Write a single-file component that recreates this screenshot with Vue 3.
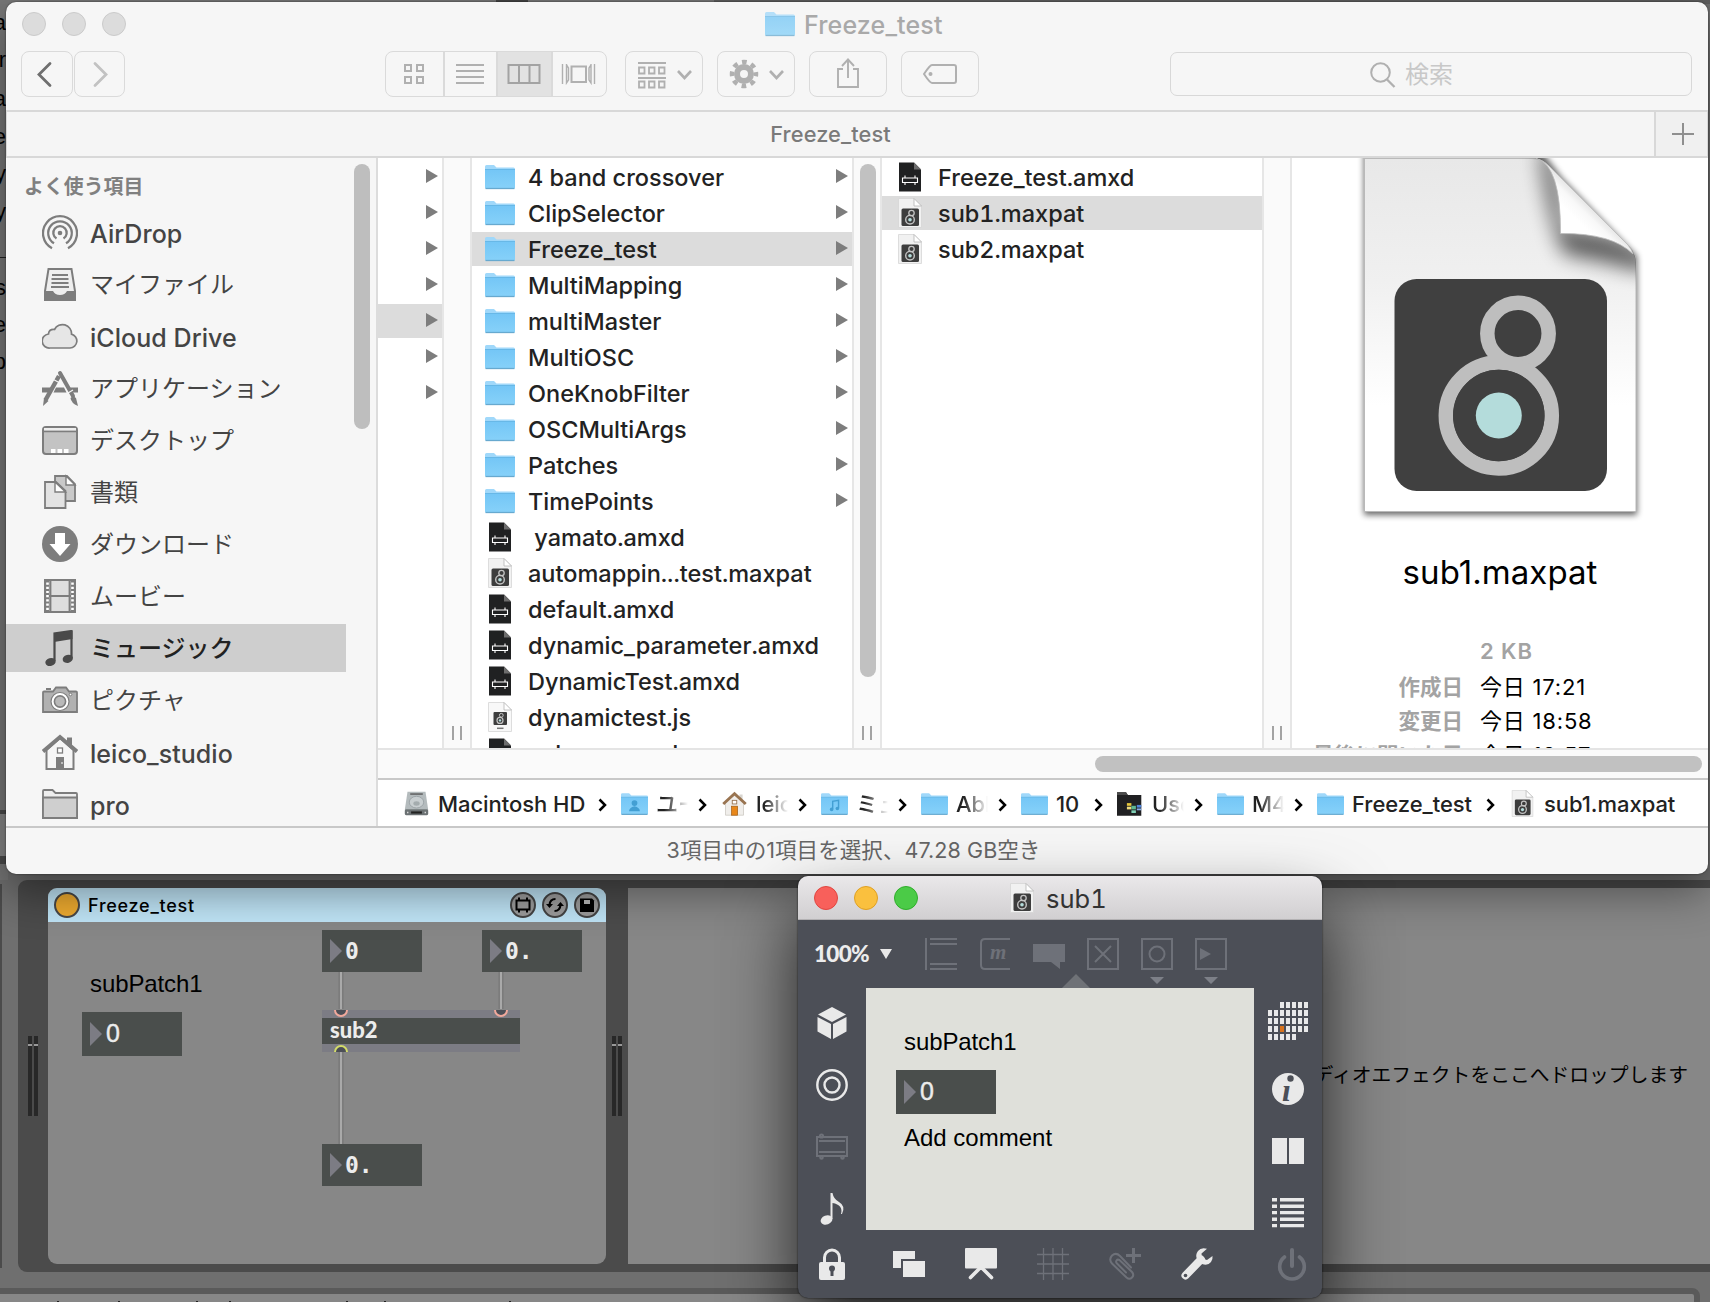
<script setup>
const favorites = [
  { icon: 'airdrop', label: 'AirDrop', latin: true },
  { icon: 'tray', label: 'マイファイル' },
  { icon: 'cloud', label: 'iCloud Drive', latin: true },
  { icon: 'apps', label: 'アプリケーション' },
  { icon: 'desktop', label: 'デスクトップ' },
  { icon: 'docs', label: '書類' },
  { icon: 'download', label: 'ダウンロード' },
  { icon: 'film', label: 'ムービー' },
  { icon: 'music', label: 'ミュージック', active: true },
  { icon: 'camera', label: 'ピクチャ' },
  { icon: 'home', label: 'leico_studio', latin: true },
  { icon: 'folder-gray', label: 'pro', latin: true },
]
const parents = [0, 0, 0, 0, 1, 0, 0]
const files = [
  { icon: 'folder', name: '4 band crossover' },
  { icon: 'folder', name: 'ClipSelector' },
  { icon: 'folder', name: 'Freeze_test', active: true },
  { icon: 'folder', name: 'MultiMapping' },
  { icon: 'folder', name: 'multiMaster' },
  { icon: 'folder', name: 'MultiOSC' },
  { icon: 'folder', name: 'OneKnobFilter' },
  { icon: 'folder', name: 'OSCMultiArgs' },
  { icon: 'folder', name: 'Patches' },
  { icon: 'folder', name: 'TimePoints' },
  { icon: 'amxd', name: ' yamato.amxd' },
  { icon: 'maxpat', name: 'automappin...test.maxpat' },
  { icon: 'amxd', name: 'default.amxd' },
  { icon: 'amxd', name: 'dynamic_parameter.amxd' },
  { icon: 'amxd', name: 'DynamicTest.amxd' },
  { icon: 'js', name: 'dynamictest.js' },
  { icon: 'amxd', name: 'eclever.amxd' },
]
const children = [
  { icon: 'amxd', name: 'Freeze_test.amxd' },
  { icon: 'maxpat', name: 'sub1.maxpat', active: true },
  { icon: 'maxpat', name: 'sub2.maxpat' },
]
const crumbs = [
  { icon: 'disk', label: 'Macintosh HD', width: 150 },
  { icon: 'folder-user', label: 'ユーザ', width: 32, fade: true },
  { icon: 'house', label: 'leico', width: 32, fade: true },
  { icon: 'folder-music', label: 'ミュー', width: 32, fade: true },
  { icon: 'folder', label: 'Abl', width: 32, fade: true },
  { icon: 'folder', label: '10', width: 28 },
  { icon: 'live', label: 'User', width: 32, fade: true },
  { icon: 'folder', label: 'M4L', width: 32, fade: true },
  { icon: 'folder', label: 'Freeze_test', width: 124 },
  { icon: 'maxpat', label: 'sub1.maxpat', width: 140, last: true },
]
const meta = [
  { k: '', v: '2 KB', dim: true },
  { k: '作成日', v: '今日 17:21' },
  { k: '変更日', v: '今日 18:58' },
  { k: '最後に開いた日', v: '今日 18:57' },
]
const edge = [['a', 23], ['r', 60], ['a', 99], ['e', 137], ['y', 174], ['y', 212], ['s', 288], ['e', 325], ['p', 362]]
const ticks = [61, 122, 200, 233, 350, 388, 513]
const cells = []
for (let r = 0; r < 5; r++) {
  for (let c = 0; c < 7; c++) {
    if ((r === 0 && c < 2) || (r === 4 && c > 4)) continue
    cells.push({ x: c * 6, y: r * 8, hot: r === 3 && c === 2 })
  }
}
</script>

<template>
  <div class="screen">
    <svg class="defs" width="0" height="0">
      <defs>
        <linearGradient id="gFolder" x1="0" y1="0" x2="0" y2="1">
          <stop offset="0" stop-color="#74c6f6" /><stop offset="1" stop-color="#86d1f9" />
        </linearGradient>
        <linearGradient id="gPaper" x1="0" y1="0" x2="0" y2="1">
          <stop offset="0" stop-color="#e8e8e8" /><stop offset=".35" stop-color="#f0f0f0" /><stop offset=".7" stop-color="#fff" /><stop offset="1" stop-color="#fff" />
        </linearGradient>
        <linearGradient id="gCurl" x1=".6" y1=".42" x2=".4" y2=".62">
          <stop offset="0" stop-color="#d2d2d2" /><stop offset=".6" stop-color="#f8f8f8" /><stop offset="1" stop-color="#fff" />
        </linearGradient>
        <filter id="soft" x="-50%" y="-50%" width="200%" height="200%"><feGaussianBlur stdDeviation="10" /></filter>
        <filter id="drop" x="-10%" y="-10%" width="120%" height="120%"><feGaussianBlur stdDeviation="3.2" /></filter>
      </defs>
      <symbol id="folder" viewBox="0 0 30 26">
        <path d="M0 2.500Q0 1 1.500 1H9L11.500 3.500H28.500Q30 3.500 30 5V12H0Z" fill="#a0d8fa" />
        <path d="M0 5.500H30V23.500Q30 24.500 29 24.500H1Q0 24.500 0 23.500Z" fill="url(#gFolder)" />
        <path d="M0 5.500H30" stroke="#5fb2e2" stroke-width=".8" />
        <path d="M.5 24.500H29.500" stroke="#67a9cf" stroke-width="1.300" />
      </symbol>
      <symbol id="folder-user" viewBox="0 0 30 26">
        <use href="#folder" width="30" height="26" /><circle cx="15" cy="12" r="3.200" fill="#439fd3" /><path d="M9 21q0-4 6-5.500q6 1.500 6 5.500z" fill="#439fd3" />
      </symbol>
      <symbol id="folder-music" viewBox="0 0 30 26">
        <use href="#folder" width="30" height="26" /><path d="M13 18.500V10L19.500 9V17.500" fill="none" stroke="#439fd3" stroke-width="1.600" /><circle cx="11.800" cy="19" r="2" fill="#439fd3" /><circle cx="18.200" cy="18" r="2" fill="#439fd3" />
      </symbol>
      <symbol id="amxd" viewBox="0 0 30 30">
        <path d="M4 .5H19L26 7.500V29.500H4Z" fill="#202122" /><path d="M19 .5V7.500H26Z" fill="#6d6d6d" />
        <path d="M7.500 16H22.500V20.500H7.500ZM10 13.500V16M20 13.500V16M10 20.500V23M20 20.500V23" fill="none" stroke="#fff" stroke-width="1.100" />
      </symbol>
      <symbol id="maxpat" viewBox="0 0 30 30">
        <path d="M3.500 .5H19L26.500 8V29.500H3.500Z" fill="#f1f1f1" stroke="#d6d6d6" stroke-width=".8" />
        <path d="M19 .5V8H26.500Z" fill="#fff" stroke="#b5b5b5" stroke-width=".8" />
        <rect x="6.500" y="10.500" width="17.500" height="17.500" rx="1.500" fill="#3d3d3d" />
        <circle cx="16.500" cy="15" r="2.700" fill="none" stroke="#c4c4c4" stroke-width="1.300" />
        <circle cx="15" cy="21.700" r="4.300" fill="none" stroke="#c4c4c4" stroke-width="1.400" /><circle cx="15" cy="21.700" r="1.800" fill="#b4dcdb" />
      </symbol>
      <symbol id="js" viewBox="0 0 30 30">
        <path d="M3.500 .5H19L26.500 8V29.500H3.500Z" fill="#f8f8f8" stroke="#d6d6d6" stroke-width=".8" />
        <path d="M19 .5V8H26.500Z" fill="#fff" stroke="#b5b5b5" stroke-width=".8" />
        <rect x="8.500" y="10" width="13.500" height="13" rx="1" fill="#3d3d3d" />
        <circle cx="16.300" cy="13.300" r="1.900" fill="none" stroke="#c4c4c4" /><circle cx="15" cy="18.400" r="3" fill="none" stroke="#c4c4c4" stroke-width="1.200" /><circle cx="15" cy="18.400" r="1.200" fill="#b4dcdb" />
        <path d="M12 26.300H18.500" stroke="#777" stroke-width="1.500" />
      </symbol>
      <symbol id="disk" viewBox="0 0 30 30">
        <path d="M5 2H25L28 22H2Z" fill="#b4bbbd" /><rect x="2" y="21.500" width="26" height="6.500" rx="1.500" fill="#6b7173" />
        <path d="M8 4.500H22" stroke="#555" stroke-width="1.500" /><ellipse cx="15" cy="13.500" rx="8" ry="6.500" fill="#c9cfd1" stroke="#9aa2a5" /><ellipse cx="15" cy="15" rx="3.500" ry="2.500" fill="#a4acae" />
        <path d="M9 25H21" stroke="#222" stroke-width="2.400" /><path d="M4.500 25H6M24 25h1.500" stroke="#ddd" stroke-width="1.500" />
      </symbol>
      <symbol id="house" viewBox="0 0 30 30">
        <path d="M20.500 5h3.500v7h-3.500z" fill="#d8d5d0" /><path d="M5 14L15 5L25 14V28H5Z" fill="#f0eeeb" stroke="#c9c5bf" stroke-width=".8" />
        <path d="M2.500 15.500L15 4L27.500 15.500" fill="none" stroke="#997451" stroke-width="3.200" /><rect x="12.500" y="11.500" width="5" height="4" fill="#fff" stroke="#997451" /><rect x="11.800" y="18" width="6.600" height="10" fill="#e8871a" stroke="#a35e13" stroke-width=".8" />
      </symbol>
      <symbol id="live" viewBox="0 0 30 26">
        <path d="M0 0H10L12 3H27V26H0Z" fill="#202022" /><path d="M0 0H10L12 3H0Z" fill="#4a4a4a" />
        <path d="M11 12h5v3h-5z" fill="#e6c73c" /><path d="M11 16h5v3h-5z" fill="#f0dd7e" /><path d="M16 15h5v4h-5z" fill="#5eb891" /><path d="M16 20h5v3h-5z" fill="#7fd0b5" /><path d="M22 14h5v3h-5z" fill="#4f83d8" /><path d="M22 18h5v2h-5z" fill="#86b0e8" />
      </symbol>

      <symbol id="airdrop" viewBox="0 0 36 36">
        <g fill="none" stroke="#7d7d7d" stroke-width="2.300"><path d="M10 34.200A17 17 0 1 1 26 34.200" /><path d="M12 29.300A11.800 11.800 0 1 1 24 29.300" /><path d="M14.500 24.600A6.700 6.700 0 1 1 21.500 24.600" /></g>
        <circle cx="18" cy="19" r="2.300" fill="#7d7d7d" />
      </symbol>
      <symbol id="tray" viewBox="0 0 36 36">
        <path d="M6.500 3H29.500L33 25V34H3V25Z" fill="#eee" stroke="#7d7d7d" stroke-width="2" /><path d="M3 25H11Q13 29 18 29Q23 29 25 25H33V34H3Z" fill="#7d7d7d" />
        <path d="M10 9H26M9.500 13H26.500M9.500 17H26.500M9 21H27" stroke="#7d7d7d" stroke-width="1.800" />
      </symbol>
      <symbol id="cloud" viewBox="0 0 36 36">
        <path d="M8 30A7 7 0 0 1 6.500 16Q7 11 12.500 11.500A9 9 0 0 1 29.500 16.200A7 7 0 0 1 28 30Z" fill="#e6e6e6" stroke="#7d7d7d" stroke-width="1.700" />
      </symbol>
      <symbol id="apps" viewBox="0 0 36 36">
        <path d="M0 17.500H9L6.500 22.500H0ZM14 17.500H22L24.500 22.500H11.500ZM28 17.500H36V22.500H30.500Z" fill="#7d7d7d" />
        <path d="M17 6L3.500 30" stroke="#7d7d7d" stroke-width="4.500" /><path d="M2 28L6.500 31L1 36Z" fill="#7d7d7d" />
        <path d="M18 3L31 26" stroke="#7d7d7d" stroke-width="4" stroke-linecap="round" /><path d="M28.500 28Q31 25 34 28L36 36Q29 33 28.500 28Z" fill="#7d7d7d" />
        <path d="M10.500 9L17 12.500M26 23l5-3" stroke="#f6f6f6" stroke-width="1.200" />
      </symbol>
      <symbol id="desktop" viewBox="0 0 36 36">
        <rect x="1" y="5" width="34" height="27" rx="3" fill="#c3c3c3" stroke="#7d7d7d" stroke-width="2" /><path d="M2 6H34V8.500H2Z" fill="#eee" /><path d="M1 9.500H35" stroke="#7d7d7d" stroke-width="1.500" /><path d="M9 27h4.500v4H9zM15.500 27h4.500v4h-4.500zM22 27h4.500v4H22z" fill="#fff" />
      </symbol>
      <symbol id="docs" viewBox="0 0 36 36">
        <path d="M13 2H25L33 10V27H13Z" fill="#c9c9c9" stroke="#7d7d7d" stroke-width="1.800" /><path d="M24 2V11H33Z" fill="#fff" stroke="#7d7d7d" stroke-width="1.400" />
        <path d="M3 8H14L23.500 17V34H3Z" fill="#e3e3e3" stroke="#7d7d7d" stroke-width="1.800" /><path d="M13 8V18H23.500Z" fill="#fff" stroke="#7d7d7d" stroke-width="1.400" />
      </symbol>
      <symbol id="download" viewBox="0 0 36 36">
        <circle cx="18" cy="18" r="18" fill="#7d7d7d" /><path d="M13 7H23V18H28.500L18 30L7.500 18H13Z" fill="#fff" />
      </symbol>
      <symbol id="film" viewBox="0 0 36 36">
        <rect x="3" y="2" width="30" height="32" fill="#dedede" stroke="#7d7d7d" stroke-width="2" /><path d="M3 18H33M8.500 2V34M27.500 2V34" stroke="#7d7d7d" stroke-width="1.800" />
        <path d="M5.500 3V34M30.500 3V34" stroke="#7d7d7d" stroke-width="4" /><path d="M5.500 4.500V34M30.500 4.500V34" stroke="#fff" stroke-width="2.600" stroke-dasharray="2.200 2" />
      </symbol>
      <symbol id="music" viewBox="0 0 36 36">
        <path d="M12.500 31V3.500L29.500 1V28" fill="none" stroke="#4a4a4a" stroke-width="2.200" /><path d="M12 4L30.500 1V9L12 12Z" fill="#4a4a4a" /><ellipse cx="8.500" cy="32" rx="5.200" ry="4" fill="#4a4a4a" transform="rotate(-15 8.500 32)" /><ellipse cx="25.800" cy="28.800" rx="5.200" ry="4" fill="#4a4a4a" transform="rotate(-15 25.800 28.800)" />
      </symbol>
      <symbol id="camera" viewBox="0 0 36 36">
        <path d="M2 9.500H11L14 5.500H24L27 9.500H34Q35 9.500 35 10.500V30H1V10.500Q1 9.500 2 9.500Z" fill="#b1b1b1" stroke="#7d7d7d" stroke-width="1.800" /><path d="M4 7h5" stroke="#7d7d7d" stroke-width="2" />
        <circle cx="18" cy="19.500" r="9" fill="#fff" stroke="#7d7d7d" stroke-width="1.200" /><circle cx="18" cy="19.500" r="5.600" fill="#b9b9b9" stroke="#7d7d7d" stroke-width="1.600" /><circle cx="28.500" cy="12.500" r="1.300" fill="#fff" stroke="#7d7d7d" />
      </symbol>
      <symbol id="home" viewBox="0 0 36 36">
        <path d="M25 3.500h5v9l-5-4z" fill="#7d7d7d" /><path d="M4.500 16V35H31.500V16L18 4Z" fill="#f6f6f6" stroke="#7d7d7d" stroke-width="2" /><path d="M1 17.500L18 3L35 17.500" fill="none" stroke="#7d7d7d" stroke-width="3.800" /><rect x="15.500" y="14" width="5" height="5" fill="#fff" stroke="#7d7d7d" stroke-width="1.300" /><path d="M14 23h8v12h-8z" fill="#7d7d7d" /><path d="M20 28v2" stroke="#fff" />
      </symbol>
      <symbol id="folder-gray" viewBox="0 0 36 36">
        <path d="M1 32V5Q1 4 2 4H10.500L13.500 7H34Q35 7 35 8V32Z" fill="#eee" stroke="#7d7d7d" stroke-width="1.800" /><path d="M1 11.500H35V32H1Z" fill="#cfcfcf" stroke="#7d7d7d" stroke-width="1.800" />
      </symbol>
    </svg>

    <!-- Live set behind the windows -->
    <div class="topstrip"><i class="t1"></i><i class="t2"></i></div>
    <div class="leftstrip">
      <span v-for="(e, i) in edge" :key="i" :style="{ top: e[1] - 18 + 'px' }">{{ e[0] }}</span>
      <i class="l0"></i><i class="l1"></i><i class="l2"></i><i class="l3"></i>
    </div>
    <div class="prev-rack"></div>
    <section class="rack">
      <div class="grip"><i></i><i></i></div>
      <div class="device">
        <header>
          <b class="led"></b>
          <span>Freeze_test</span>
          <svg viewBox="0 0 26 26"><circle cx="13" cy="13" r="12" class="knob" /><path d="M6.500 8.500H19.500V17.500H6.500ZM9 5.500V8.500M17 5.500V8.500M9 17.500V20.500M17 17.500V20.500" fill="none" stroke="#000" stroke-width="2" /></svg>
          <svg viewBox="0 0 26 26"><circle cx="13" cy="13" r="12" class="knob" /><path d="M13.500 7Q8 7 7.500 13M12.500 19Q18 19 18.500 13" fill="none" stroke="#000" stroke-width="2.200" /><path d="M4 12H11L7.500 16ZM15 14H22L18.500 10Z" /></svg>
          <svg viewBox="0 0 26 26"><circle cx="13" cy="13" r="12" class="knob" /><path d="M6 6.500H18L20 8.500V20H6Z" /><path d="M10 8h6v4h-6z" fill="#b9b9b9" /></svg>
        </header>
        <div class="patch">
          <svg class="cords" width="558" height="342">
            <g stroke="#777" stroke-width="5"><path d="M293 50V87M453 50V87M293 130V222" /></g>
            <g stroke="#a9a9a9" stroke-width="2.200"><path d="M293 50V87M453 50V87M293 130V222" /></g>
          </svg>
          <span class="comment c1">subPatch1</span>
          <div class="num big n0"><u></u>0</div>
          <div class="num mono n1"><u></u>0</div>
          <div class="num mono n2"><u></u>0.</div>
          <div class="num mono n3"><u></u>0.</div>
          <div class="obj">sub2
            <svg width="198" height="42"><g fill="#4c4f57" stroke-width="2"><path d="M13 0A6 6 0 0 0 25 0M173 0A6 6 0 0 0 185 0" stroke="#f1a99c" /><path d="M13 42A6 6 0 0 1 25 42" stroke="#d3dc69" /></g></svg>
          </div>
        </div>
      </div>
      <div class="grip"><i></i><i></i></div>
      <div class="dropzone">ディオエフェクトをここへドロップします</div>
    </section>
    <div class="footbar"><i v-for="t in ticks" :key="t" :style="{ left: t + 'px' }"></i></div>

    <!-- Finder -->
    <section class="finder">
      <div class="titlebar">
        <i></i><i></i><i></i>
        <h1><svg width="30" height="26"><use href="#folder" /></svg><span>Freeze_test</span></h1>
      </div>
      <div class="tools">
        <div class="btn nav"><svg width="50" height="44"><path d="M28 11.500L17 22.500L28 33.500" fill="none" stroke="#6f6f6f" stroke-width="2.800" stroke-linecap="round" /></svg></div>
        <div class="btn nav"><svg width="48" height="44"><path d="M20 11.500L31 22.500L20 33.500" fill="none" stroke="#c2c2c2" stroke-width="2.800" stroke-linecap="round" /></svg></div>
        <div class="btn seg">
          <span><svg width="58" height="44" class="ln"><path d="M19 13h6v6h-6zM31 13h6v6h-6zM19 25h6v6h-6zM31 25h6v6h-6z" /></svg></span>
          <span><svg width="52" height="44" class="ln"><path d="M11 13H39M11 19H39M11 25H39M11 31H39" /></svg></span>
          <span class="on"><svg width="53" height="44"><path d="M10.500 13h31v18h-31zM21 13V31M31.500 13V31" fill="none" stroke="#a3a3a3" stroke-width="2" /></svg></span>
          <span><svg width="54" height="44" class="ln"><path d="M18.500 14.500h14.500v15.500h-14.500z" /><path d="M9.500 12V32M13.500 12V31L15.500 28V16L13.500 13M41.500 12V32M38 12V31L36 28V16L38 13" stroke-width="1.400" /></svg></span>
        </div>
        <div class="btn a1"><svg width="76" height="44" class="ln"><path d="M12 11H40M12 26H40" stroke-width="1.800" /><path d="M13 15.500h5.500v6H13zM23 15.500h5.500v6H23zM33 15.500h5.500v6H33zM13 29.500h5.500v6H13zM23 29.500h5.500v6H23zM33 29.500h5.500v6H33z" stroke-width="1.800" /><path d="M52 19L58.500 26L65 19" stroke-width="2.600" /></svg></div>
        <div class="btn"><svg width="76" height="44" class="ln"><circle cx="26" cy="22" r="7" stroke-width="6" /><circle cx="26" cy="22" r="12" stroke-width="4.500" stroke-dasharray="4.710 4.710" stroke-dashoffset="2.350" /><path d="M52 19L58.500 26L65 19" stroke-width="2.600" /></svg></div>
        <div class="btn"><svg width="76" height="44" class="ln"><path d="M33 17H28V35H48V17H43M38 26V8M32 14L38 7.500L44 14" stroke-width="1.900" /></svg></div>
        <div class="btn"><svg width="76" height="44" class="ln"><path d="M30 13H52Q54 13 54 15V29Q54 31 52 31H30Q28 31 22 22Q28 13 30 13Z" stroke-width="2" /><circle cx="28.500" cy="22" r="2" fill="#b0b0b0" stroke="none" /></svg></div>
        <div class="search"><svg width="28" height="28" class="ln"><circle cx="11.500" cy="11.500" r="9.300" /><path d="M18 18.500L25.500 26" stroke-width="2.300" /></svg><span>検索</span></div>
      </div>
      <div class="tabs"><span>Freeze_test</span><b><svg width="24" height="24"><path d="M12 1V23M1 12H23" stroke="#8f8f8f" stroke-width="2" /></svg></b></div>
      <div class="main">
        <aside>
          <h2>よく使う項目</h2>
          <div v-for="f in favorites" :key="f.label" class="fav" :class="{ active: f.active, latin: f.latin }">
            <svg width="36" height="36"><use :href="'#' + f.icon" /></svg><span>{{ f.label }}</span>
          </div>
          <i class="thumb"></i>
        </aside>
        <div class="right">
          <div class="columns">
            <div class="col first">
              <div v-for="(p, i) in parents" :key="i" class="row" :class="{ active: p }"><em></em></div>
            </div>
            <div class="gutter"><i></i><i></i></div>
            <div class="col mid">
              <div v-for="f in files" :key="f.name" class="row" :class="{ active: f.active }">
                <svg width="30" :height="f.icon === 'folder' ? 26 : 30"><use :href="'#' + f.icon" /></svg><span>{{ f.name }}</span><em v-if="f.icon === 'folder'"></em>
              </div>
            </div>
            <div class="gutter"><b></b><i></i><i></i></div>
            <div class="col mid">
              <div v-for="f in children" :key="f.name" class="row" :class="{ active: f.active }">
                <svg width="30" height="30"><use :href="'#' + f.icon" /></svg><span>{{ f.name }}</span>
              </div>
            </div>
            <div class="gutter"><i></i><i></i></div>
            <div class="preview">
              <svg class="paper" width="300" height="372" viewBox="1350 158 300 372">
                <path d="M1364 140H1533Q1550 162 1562 178L1637 256V515H1364Z" fill="#000" opacity=".6" filter="url(#drop)" />
                <path d="M1364.500 158.500H1532Q1541 158 1549 166L1628 245Q1636 253 1636 263V511.500H1364.500Z" fill="url(#gPaper)" stroke="#b9b9b9" />
                <clipPath id="pc"><path d="M1365 158H1532Q1541 158 1549 166L1628 245Q1636 253 1636 263V511H1365Z" /></clipPath>
                <g clip-path="url(#pc)"><path d="M1545 150Q1556 180 1561 234Q1612 233 1650 262L1640 266Q1600 255 1568 250Q1552 215 1545 150Z" fill="#000" stroke="#000" stroke-width="10" opacity=".62" filter="url(#soft)" /></g>
                <path d="M1536 158.500Q1561 165 1560.500 233.500Q1612 233 1633 254Q1632 250 1628 245L1549 166Q1543 160 1536 158.500Z" fill="url(#gCurl)" stroke="#bdbdbd" stroke-width=".8" />
                <rect x="1394.500" y="279" width="212.500" height="212" rx="22" fill="#404040" />
                <g fill="none" stroke="#bebebe" stroke-width="14.500"><circle cx="1518" cy="333.500" r="30.700" /><circle cx="1498.800" cy="415.500" r="53" /></g>
                <circle cx="1498.800" cy="415.500" r="45.700" fill="#404040" /><circle cx="1498.800" cy="415.500" r="23" fill="#b4dcdb" />
              </svg>
              <h3>sub1.maxpat</h3>
              <dl v-for="m in meta" :key="m.v" :class="{ dim: m.dim }"><dt>{{ m.k }}</dt><dd>{{ m.v }}</dd></dl>
            </div>
          </div>
          <div class="hscroll"><i></i></div>
          <div class="path">
            <div v-for="c in crumbs" :key="c.label" class="crumb">
              <svg width="27" :height="c.icon.startsWith('folder') || c.icon === 'live' ? 24 : 27"><use :href="'#' + c.icon" /></svg>
              <span :class="{ fade: c.fade }" :style="{ width: c.width + 'px' }">{{ c.label }}</span>
              <svg v-if="!c.last" class="chev" width="9" height="14"><path d="M1.500 1.500L7 7L1.500 12.500" fill="none" stroke="#000" stroke-width="2.500" /></svg>
            </div>
          </div>
        </div>
      </div>
      <div class="status">3項目中の1項目を選択、47.28 GB空き</div>
    </section>

    <!-- Patcher window -->
    <section class="patcher">
      <header>
        <i class="r"></i><i class="y"></i><i class="g"></i>
        <h4><svg width="30" height="30"><use href="#maxpat" /></svg><span>sub1</span></h4>
      </header>
      <div class="ptop">
        <span class="zoom">100%</span>
        <svg class="dn" width="12" height="10"><path d="M0 0H12L6 10Z" fill="#e9e9e9" /></svg>
        <svg width="32" height="32" class="dk"><path d="M1 0V32M5 1H32M5 6H32M5 26H32M5 31H32" /></svg>
        <svg width="32" height="32" class="dk"><path d="M31 1H6Q2 1 2 5V27Q2 31 6 31H31" /><text x="11" y="21">m</text></svg>
        <svg width="32" height="32"><path d="M0 6H32V24H27V31L18 24H0Z" fill="#6e7179" /></svg>
        <svg width="32" height="32" class="dk"><path d="M1 1H31V31H1ZM8 8L24 24M24 8L8 24" /></svg>
        <svg width="32" height="32" class="dk"><path d="M1 1H31V31H1Z" /><circle cx="16" cy="16" r="7.500" /></svg>
        <svg width="32" height="32" class="dk"><path d="M1 1H31V31H1Z" /><path d="M5 10V22L16 16Z" fill="#6e7179" stroke="none" /></svg>
        <svg class="marks" width="180" height="14"><path d="M0 14L14 0L28 14Z" fill="#6f7277" /><path d="M88 3H102L95 10ZM142 3H156L149 10Z" fill="#7d8088" /></svg>
      </div>
      <div class="pmid">
        <nav class="pl">
          <svg width="32" height="32"><path d="M16 0L30 7.500L16 15L2 7.500ZM1.500 10L15 17V32L1.500 24.500ZM30.500 10L17 17V32L30.500 24.500Z" fill="#e9e9e9" /></svg>
          <svg width="32" height="32"><g fill="none" stroke="#e9e9e9" stroke-width="2.400"><circle cx="16" cy="16" r="14.700" /><circle cx="16" cy="16" r="7.500" /></g></svg>
          <svg width="32" height="32" class="dk"><path d="M1 5H31V24H1ZM3 9H29M3 20H29" /><circle cx="5.500" cy="4" r="1.600" /><circle cx="5.500" cy="25.500" r="1.300" /><circle cx="26.500" cy="25.500" r="1.300" /></svg>
          <svg width="32" height="34"><ellipse cx="10.500" cy="28" rx="6" ry="4.500" fill="#e9e9e9" transform="rotate(-20 10.500 28)" /><path d="M14.500 27V1H16.500Q17.500 7 23 10Q30 14 26 22H25Q27.500 13 16.500 11V27Z" fill="#e9e9e9" /></svg>
        </nav>
        <div class="canvas">
          <span class="comment c2">subPatch1</span>
          <div class="num big n4"><u></u>0</div>
          <span class="comment c3">Add comment</span>
        </div>
        <nav class="pr">
          <svg width="40" height="40"><rect v-for="(c, i) in cells" :key="i" :x="c.x" :y="c.y" width="4" height="6" :fill="c.hot ? '#d9731c' : '#e9e9e9'" /></svg>
          <svg width="32" height="32"><circle cx="16" cy="16" r="16" fill="#e9e9e9" /><text x="10" y="28" class="info">ı</text><circle cx="18.500" cy="5.500" r="3.200" fill="#4c4f57" /></svg>
          <svg width="32" height="26"><path d="M0 0H15V26H0ZM17 0H32V26H17Z" fill="#e9e9e9" /></svg>
          <svg width="32" height="30"><path d="M0 1.800H5M8 1.800H32M0 8.200H5M8 8.200H32M0 14.600H5M8 14.600H32M0 21.200H5M8 21.200H32M0 27.600H5M8 27.600H32" stroke="#e9e9e9" stroke-width="3.400" /></svg>
        </nav>
      </div>
      <footer>
        <svg width="32" height="32"><rect x="3" y="14" width="26" height="18" rx="2" fill="#e9e9e9" /><path d="M8.500 15V9.500A7.500 7.500 0 0 1 23.500 9.500V15" fill="none" stroke="#e9e9e9" stroke-width="3" /><circle cx="16" cy="20.500" r="3" fill="#4c4f57" /><path d="M14.500 21h3v7h-3z" fill="#4c4f57" /></svg>
        <svg width="32" height="32"><path d="M0 3H22V11H8V20H0Z" fill="#e9e9e9" /><path d="M10 13H32V29H10Z" fill="#e9e9e9" /></svg>
        <svg width="32" height="32"><rect width="32" height="20.500" rx="1" fill="#e9e9e9" /><path d="M16 19L5.500 29.500M16 19L26.500 29.500" stroke="#e9e9e9" stroke-width="3.600" stroke-linecap="round" /></svg>
        <svg width="32" height="32" class="dk"><path d="M6.500 0V32M16 0V32M25.500 0V32M0 6.500H32M0 16H32M0 25.500H32" stroke-width="1.300" /></svg>
        <svg width="32" height="32" class="dk"><path d="M22 19.500L11 8Q7 4 3 7.500Q-.5 11.500 3 15.500L17.500 29.500Q20.500 32 23 29.500Q25.500 27 23 24L10.500 12Q8.500 11 7.500 12.500Q6.500 14 8 15.500L17 24.500" stroke-linecap="round" /><path d="M24.500 0V15M17 7.500H32" stroke-width="3" /></svg>
        <svg width="32" height="32"><path d="M4.500 27.500L20 11.500" stroke="#e9e9e9" stroke-width="8" stroke-linecap="round" /><path d="M26 .8Q20-1 17 3Q14 7 16 11L21 16Q27 18 30 14Q32 11.500 31.500 8L26 12L21 10.500L20.500 5.500Z" fill="#e9e9e9" /><circle cx="4.500" cy="27.500" r="1.800" fill="#4c4f57" /></svg>
        <svg width="32" height="32"><path d="M8.500 9A12.300 12.300 0 1 0 23.500 9" fill="none" stroke="#6e7179" stroke-width="3.600" stroke-linecap="round" /><path d="M16 2V18" stroke="#6e7179" stroke-width="4" stroke-linecap="round" /></svg>
      </footer>
    </section>
  </div>
</template>

<style>
body { margin: 0; overflow: hidden; }
</style>

<style scoped>
* { box-sizing: border-box; }
.screen { position: relative; width: 1710px; height: 1302px; overflow: hidden; background: #6f6f6f; font-family: Inter, "Noto Sans CJK JP", sans-serif; color: #222; }
.defs { position: absolute; }
svg { display: block; flex: none; }
h1, h2, h3, h4, dl, dt, dd { margin: 0; font-weight: 400; }

.topstrip { position: absolute; inset: 0 0 auto; height: 4px; background: #777; }
.topstrip i { position: absolute; top: 0; height: 4px; background: #454545; }
.t1 { left: 496px; width: 32px; }
.t2 { left: 714px; width: 996px; background: #5e5e5e !important; }
.leftstrip { position: absolute; left: 0; top: 4px; width: 8px; height: 876px; overflow: hidden; background: #767676; }
.leftstrip span { position: absolute; right: 2px; font: 22px/28px "Liberation Sans", Arial, sans-serif; color: #000; }
.leftstrip i { position: absolute; left: 0; width: 8px; background: #4b4b4b; }
.leftstrip .l0 { top: 253px; height: 1px; background: #222; }
.leftstrip .l1 { top: 806px; height: 4px; }
.leftstrip .l2 { top: 810px; height: 42px; background: #858585; }
.leftstrip .l3 { top: 852px; height: 8px; }
.prev-rack { position: absolute; left: 0; top: 884px; width: 2px; height: 384px; background: #4b4b4b; }

.rack { position: absolute; left: 18px; top: 880px; width: 1700px; height: 392px; padding: 8px 0 8px 10px; display: flex; background: #4b4b4b; border-radius: 9px; }
.grip { display: flex; gap: 2px; width: 20px; padding-top: 148px; flex: none; }
.grip i { width: 4px; height: 80px; background: linear-gradient(#282828 8px, #999 8px, #999 10px, #282828 10px); }
.device + .grip { margin-left: 6px; width: 16px; }
.device { width: 558px; flex: none; border-radius: 9px; overflow: hidden; background: #878787; }
.device header { display: flex; align-items: center; gap: 6px; height: 34px; padding: 0 6px; background: #bfe4f6; }
.device header span { flex: 1; margin-left: 2px; font-size: 18px; font-weight: 500; color: #000; letter-spacing: .75px; }
.device header svg { width: 26px; height: 26px; }
.led { width: 26px; height: 26px; border-radius: 50%; background: #edaa2f; border: 2px solid #484848; }
.knob { fill: #9c9c9c; stroke: #444; stroke-width: 2; }
.patch { position: relative; height: 342px; }
.cords { position: absolute; left: 0; top: 0; }
.comment { position: absolute; font: 24px/28px "Liberation Sans", Arial, sans-serif; color: #000; white-space: nowrap; letter-spacing: -.1px; }
.num { position: absolute; width: 100px; height: 42px; display: flex; align-items: center; gap: 3px; padding: 0 0 1px 8px; background: #4a4e4c; color: #ececec; }
.num u { border-left: 12px solid #7c7c84; border-top: 12px solid transparent; border-bottom: 12px solid transparent; }
.mono { font: bold 23px "DejaVu Sans Mono", monospace; }
.big { height: 44px; font: 25px "Liberation Sans", Arial, sans-serif; padding-bottom: 1px; gap: 4px; -webkit-text-stroke: .4px #ececec; }
.c1 { left: 42px; top: 48px; }
.n0 { left: 34px; top: 90px; }
.n1 { left: 274px; top: 8px; }
.n2 { left: 434px; top: 8px; }
.n3 { left: 274px; top: 222px; }
.obj { position: absolute; left: 274px; top: 88px; width: 198px; height: 42px; padding-left: 8px; border: solid #7c7c84; border-width: 8px 0; background: #4a4e4c; color: #ececec; font: 900 22px/24px Lato, sans-serif; }
.obj svg { position: absolute; left: 0; top: -8px; }
.dropzone { flex: 1; padding-right: 30px; background: #878787; color: #000; font: 19.800px/371px "Noto Sans CJK JP", sans-serif; text-align: right; white-space: nowrap; overflow: hidden; }
.footbar { position: absolute; left: -10px; top: 1288px; width: 1710px; height: 30px; border: 6px solid #5a5a5a; border-radius: 8px; background: #878787; }
.footbar i { position: absolute; top: 7px; width: 2px; height: 2px; background: #222; }

.finder { position: absolute; left: 6px; top: 2px; width: 1702px; height: 872px; display: flex; flex-direction: column; background: #f6f6f6; border-radius: 10px; box-shadow: 0 0 2px rgba(0,0,0,.6), 0 18px 44px rgba(0,0,0,.42); }
.titlebar { position: relative; display: flex; gap: 16px; height: 46px; padding: 10px 0 0 16px; flex: none; }
.titlebar > i { width: 24px; height: 24px; border-radius: 50%; background: #dcdcdc; border: 1px solid #cbcbcb; }
h1 { display: flex; align-items: center; gap: 9px; height: 26px; margin: -1px 0 0 623px; font-size: 25px; color: #a9a9a9; font-weight: 450; }
h1 svg { opacity: .75; }
h1 span { letter-spacing: .15px; padding-top: 2px; }
.tools { display: flex; height: 62px; padding: 3px 0 0 15px; flex: none; }
.btn { height: 46px; width: 78px; margin-left: 14px; border: 1px solid #dadada; border-radius: 8px; display: flex; flex: none; }
.btn.nav { width: 52px; margin: 0; border-width: 1px; }
.btn.nav + .nav { width: 51px; margin-left: 1px; }
.btn.seg { width: 222px; margin-left: 260px; overflow: hidden; }
.seg span { border-right: 2px solid #dadada; flex: none; width: 59px; }
.seg span + span { width: 53px; }
.seg span.on { width: 55px; background: #e2e2e2; }
.seg span:last-child { border: 0; }
.btn.a1 { margin-left: 18px; }
.ln { fill: none; stroke: #b0b0b0; stroke-width: 2; }
.search { width: 522px; height: 44px; margin: 1px 0 0 191px; border: 1px solid #d8d8d8; border-radius: 7px; display: flex; gap: 8px; align-items: center; justify-content: center; font-size: 24px; color: #c8c8c8; padding-right: 40px; }
.search span { margin-top: -3px; }
.search .ln { transform: translateY(1px); }
.tabs { display: flex; height: 48px; border: solid #d8d8d8; border-width: 2px 1px; flex: none; background: #f5f5f5; }
.tabs span { flex: 1; text-align: center; font: 450 21.800px/45px Inter, sans-serif; letter-spacing: .1px; color: #7a7a7a; }
.tabs b { width: 53px; border-left: 2px solid #d8d8d8; background: #f0f0f0; display: flex; align-items: center; padding-left: 15px; }

.main { display: flex; height: 668px; flex: none; }
aside { position: relative; width: 372px; border-right: 2px solid #dcdcdc; overflow: hidden; flex: none; }
h2 { height: 48px; padding: 11px 0 0 18px; font: 700 19.900px/33px "Noto Sans CJK JP", sans-serif; color: #808080; }
.fav { display: flex; align-items: center; gap: 12px; width: 340px; height: 48px; margin: 2px 0 4px; padding-left: 36px; color: #444; }
.fav span { font-size: 24px; line-height: 46px; padding-top: 2px; white-space: nowrap; }
.fav.latin span { font-size: 25px; font-weight: 450; letter-spacing: .05px; line-height: 46px; padding-top: 3px; }
.fav.active { background: #cecece; color: #222; font-weight: 500; }
.thumb { position: absolute; left: 348px; top: 6px; width: 16px; height: 265px; border-radius: 8px; background: #bebebe; }
.right { width: 1330px; display: flex; flex-direction: column; background: #fff; }
.columns { display: flex; height: 590px; overflow: hidden; flex: none; }
.col { padding-top: 2px; flex: none; overflow: hidden; }
.first { width: 64px; }
.mid { width: 380px; }
.row { display: flex; align-items: center; height: 34px; margin-bottom: 2px; padding: 0 4px 0 13px; white-space: pre; }
.row span { flex: 1; padding: 2px 0 0 13px; font-size: 23.500px; line-height: 34px; font-weight: 450; font-feature-settings: "tnum"; color: #222; }
.row em { margin-left: auto; margin-top: -2px; border-left: 12px solid #7d7d7d; border-top: 7px solid transparent; border-bottom: 7px solid transparent; }
.row.active { background: #dcdcdc; }
.gutter { position: relative; width: 30px; border: solid #e6e6e6; border-width: 0 2px; background: #fafafa; display: flex; gap: 6px; align-items: flex-end; padding: 0 0 8px 8px; flex: none; }
.gutter i { width: 2px; height: 14px; background: #a3a3a3; }
.gutter b { position: absolute; left: 6px; top: 6px; width: 16px; height: 513px; border-radius: 8px; background: #c1c1c1; }
.preview { width: 416px; overflow: hidden; flex: none; }
.paper { margin-left: 58px; }
h3 { margin-top: 17px; height: 50px; font: 400 33px/51px Inter, sans-serif; letter-spacing: .05px; text-align: center; color: #000; }
dl { display: flex; gap: 17px; height: 34px; line-height: 34px; font-size: 22px; color: #000; white-space: nowrap; }
dl.dim { margin-top: 37px; height: 36px; }
dl.dim dd { color: #a3a3a3; font-weight: 600; letter-spacing: .9px; }
dd { letter-spacing: .8px; }
dt { width: 171px; text-align: right; font-weight: 700; font-size: 21.500px; color: #a3a3a3; }
.hscroll { height: 32px; border: solid #e4e4e4; border-width: 2px 0 0; border-bottom: 2px solid #c8c8c8; background: #fafafa; padding: 6px 6px 0 717px; flex: none; }
.hscroll i { display: block; height: 16px; border-radius: 8px; background: #c1c1c1; }
.path { display: flex; height: 46px; padding: 1px 0 0 24px; flex: none; }
.crumb { display: flex; align-items: center; margin-right: 13px; }
.crumb > svg:first-child { transform: translateX(1px); }
.crumb span { margin-left: 9px; margin-right: 1px; overflow: hidden; white-space: nowrap; font-size: 22px; line-height: 43px; padding-top: 2px; color: #222; font-weight: 450; letter-spacing: -.05px; }
.crumb .fade { -webkit-mask-image: linear-gradient(90deg, #000 25%, transparent); mask-image: linear-gradient(90deg, #000 25%, transparent); }
.chev { margin-left: 9px; transform: translateY(1px); }
.status { flex: 1; border-top: 2px solid #c8c8c8; text-align: center; font-size: 21.500px; line-height: 44px; letter-spacing: .08px; color: #666; border-radius: 0 0 10px 10px; padding-right: 7px; }

.patcher { position: absolute; left: 798px; top: 876px; width: 524px; height: 422px; border-radius: 10px; background: #4c4f57; box-shadow: 0 0 2px rgba(0,0,0,.8), 0 36px 70px rgba(0,0,0,.75); }
.patcher > header { display: flex; gap: 16px; height: 44px; padding: 10px 0 0 16px; border-radius: 10px 10px 0 0; background: linear-gradient(#eae8ea, #d1cfd1); border-bottom: 1px solid #b3b1b3; }
.patcher > header i { width: 24px; height: 24px; border-radius: 50%; border: 1px solid; }
.r { background: #f8605b; border-color: #e14640 !important; }
.y { background: #fac03e; border-color: #dfa023 !important; }
.g { background: #4bcb47; border-color: #2fae2b !important; }
h4 { display: flex; gap: 9px; align-items: center; height: 30px; margin: -3px 0 0 73px; font-size: 25.500px; color: #333; }
h4 span { font-feature-settings: "tnum"; padding-top: 1px; }
.ptop { position: relative; display: flex; height: 68px; padding: 18px 0 0 16px; }
.ptop > svg { margin-right: 22px; }
.zoom { width: 55px; font: 900 22.500px/31px Lato, sans-serif; color: #ececec; letter-spacing: -.7px; }
.ptop .dn { margin: 11px 33px 0 11px; }
.ptop .marks { position: absolute; left: 264px; top: 54px; margin: 0; }
.dk { fill: none; stroke: #6e7179; stroke-width: 2; }
.dk text { font: italic bold 21px "Liberation Serif", serif; fill: #6e7179; stroke: none; }
.info { font: italic bold 32px "Liberation Serif", serif; fill: #4c4f57; }
.pmid { display: flex; height: 242px; }
.pl, .pr { width: 68px; display: flex; flex-direction: column; align-items: center; flex: none; }
.pl { padding-top: 19px; gap: 30px; }
.pl svg:nth-child(3) { margin-top: 1px; }
.pl svg:nth-child(4) { margin-top: -2px; }
.pr { padding-top: 14px; gap: 31px; }
.pr svg:nth-child(3) { margin-top: 2px; }
.pr svg:nth-child(4) { margin-top: 3px; }
.canvas { position: relative; width: 388px; background: #dfe0da; }
.c2 { left: 38px; top: 40px; }
.n4 { left: 30px; top: 82px; }
.c3 { left: 38px; top: 136px; letter-spacing: 0; }
.patcher footer { display: flex; padding: 18px 0 0 18px; }
.patcher footer svg { margin-right: 40px; overflow: visible; }
.patcher footer svg:first-child { margin-right: 45px; }
.patcher footer svg:nth-child(6) { margin-right: 63px; }
</style>
